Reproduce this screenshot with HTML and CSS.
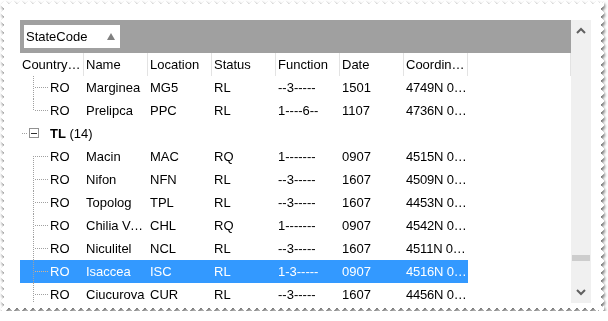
FILE: index.html
```html
<!DOCTYPE html>
<html lang="en">
<head>
    <meta charset="UTF-8">
    <title>Group by StateCode</title>
    <link rel="stylesheet" href="styles.css">
</head>
<body>
    <div class="paper">
        <div class="sheet">
            <div class="control">
                <div class="grid">
                    <div class="groupbar">
                        <div class="chip">
                            <span>StateCode</span>
                            <span class="sort-up"></span>
                        </div>
                    </div>

                    <div class="header">
                        <div class="hcell">CountryCode</div>
                        <div class="hcell">Name</div>
                        <div class="hcell">Location</div>
                        <div class="hcell">Status</div>
                        <div class="hcell">Function</div>
                        <div class="hcell">Date</div>
                        <div class="hcell">Coordinates</div>
                        <div class="hfill"></div>
                    </div>

                    <div class="rows">
                        <div class="row">
                            <div class="cell tree">RO</div>
                            <div class="cell">Marginea</div>
                            <div class="cell">MG5</div>
                            <div class="cell">RL</div>
                            <div class="cell">--3-----</div>
                            <div class="cell">1501</div>
                            <div class="cell coord">4749N 02549E</div>
                        </div>
                        <div class="row">
                            <div class="cell tree last">RO</div>
                            <div class="cell">Prelipca</div>
                            <div class="cell">PPC</div>
                            <div class="cell">RL</div>
                            <div class="cell">1----6--</div>
                            <div class="cell">1107</div>
                            <div class="cell coord">4736N 02611E</div>
                        </div>

                        <div class="group">
                            <span class="expander"><span class="minus"></span></span>
                            <span class="group-title"><b>TL</b> (14)</span>
                        </div>

                        <div class="row">
                            <div class="cell tree first">RO</div>
                            <div class="cell">Macin</div>
                            <div class="cell">MAC</div>
                            <div class="cell">RQ</div>
                            <div class="cell">1-------</div>
                            <div class="cell">0907</div>
                            <div class="cell coord">4515N 02821E</div>
                        </div>
                        <div class="row">
                            <div class="cell tree">RO</div>
                            <div class="cell">Nifon</div>
                            <div class="cell">NFN</div>
                            <div class="cell">RL</div>
                            <div class="cell">--3-----</div>
                            <div class="cell">1607</div>
                            <div class="cell coord">4509N 02822E</div>
                        </div>
                        <div class="row">
                            <div class="cell tree">RO</div>
                            <div class="cell">Topolog</div>
                            <div class="cell">TPL</div>
                            <div class="cell">RL</div>
                            <div class="cell">--3-----</div>
                            <div class="cell">1607</div>
                            <div class="cell coord">4453N 02820E</div>
                        </div>
                        <div class="row">
                            <div class="cell tree">RO</div>
                            <div class="cell">Chilia Veche</div>
                            <div class="cell">CHL</div>
                            <div class="cell">RQ</div>
                            <div class="cell">1-------</div>
                            <div class="cell">0907</div>
                            <div class="cell coord">4542N 02917E</div>
                        </div>
                        <div class="row">
                            <div class="cell tree">RO</div>
                            <div class="cell">Niculitel</div>
                            <div class="cell">NCL</div>
                            <div class="cell">RL</div>
                            <div class="cell">--3-----</div>
                            <div class="cell">1607</div>
                            <div class="cell coord">4511N 02828E</div>
                        </div>
                        <div class="row selected">
                            <div class="cell tree">RO</div>
                            <div class="cell">Isaccea</div>
                            <div class="cell">ISC</div>
                            <div class="cell">RL</div>
                            <div class="cell">1-3-----</div>
                            <div class="cell">0907</div>
                            <div class="cell coord">4516N 02827E</div>
                        </div>
                        <div class="row">
                            <div class="cell tree">RO</div>
                            <div class="cell">Ciucurova</div>
                            <div class="cell">CUR</div>
                            <div class="cell">RL</div>
                            <div class="cell">--3-----</div>
                            <div class="cell">1607</div>
                            <div class="cell coord">4456N 02829E</div>
                        </div>
                    </div>
                </div>

                <div class="scrollbar">
                    <svg class="arrow" width="10" height="7" viewBox="0 0 10 7">
                        <polyline points="1,6 5,2 9,6" fill="none" stroke="#606060" stroke-width="2"/>
                    </svg>
                    <div class="track">
                        <div class="thumb"></div>
                    </div>
                    <svg class="arrow" width="10" height="7" viewBox="0 0 10 7">
                        <polyline points="1,1 5,5 9,1" fill="none" stroke="#606060" stroke-width="2"/>
                    </svg>
                </div>
            </div>
        </div>
    </div>
</body>
</html>
```

FILE: styles.css
```css
body {
    margin: 0;
    background-color: #ffffff;
    font-family: 'Liberation Sans', Arial, sans-serif;
    font-size: 13px;
    color: #000000;
}

.paper {
    width: 603px;
    height: 310px;
    margin: 1px 0 0 1px;
    filter: drop-shadow(1px 2px 1.5px rgba(0, 0, 0, 0.5)) drop-shadow(0 0 0.5px rgba(0, 0, 0, 0.2));
}

.sheet {
    box-sizing: border-box;
    width: 100%;
    height: 100%;
    padding: 19px 13px 7px 19px;
    background-color: #ffffff;
    -webkit-mask:
        linear-gradient(#000, #000) 3px 3px / calc(100% - 6px) calc(100% - 6px) no-repeat,
        radial-gradient(circle, #000 2.6px, transparent 3px) 0 0 / 8px 6px repeat-x,
        radial-gradient(circle, #000 2.6px, transparent 3px) 0 100% / 8px 6px repeat-x,
        radial-gradient(circle, #000 2.6px, transparent 3px) 0 0 / 6px 8px repeat-y,
        radial-gradient(circle, #000 2.6px, transparent 3px) 100% 0 / 6px 8px repeat-y;
    mask:
        linear-gradient(#000, #000) 3px 3px / calc(100% - 6px) calc(100% - 6px) no-repeat,
        radial-gradient(circle, #000 2.6px, transparent 3px) 0 0 / 8px 6px repeat-x,
        radial-gradient(circle, #000 2.6px, transparent 3px) 0 100% / 8px 6px repeat-x,
        radial-gradient(circle, #000 2.6px, transparent 3px) 0 0 / 6px 8px repeat-y,
        radial-gradient(circle, #000 2.6px, transparent 3px) 100% 0 / 6px 8px repeat-y;
}

.control {
    display: flex;
    width: 571px;
    height: 283px;
    overflow: hidden;
}

.grid {
    width: 551px;
    display: flex;
    flex-direction: column;
    overflow: hidden;
}

/* group by bar */
.groupbar {
    height: 33px;
    flex: none;
    box-sizing: border-box;
    padding: 5px 4px;
    background-color: #a0a0a0;
}

.chip {
    width: 96px;
    height: 23px;
    box-sizing: border-box;
    padding: 0 5px 0 2px;
    display: flex;
    align-items: center;
    justify-content: space-between;
    background-color: #ffffff;
    line-height: 23px;
}

.sort-up {
    width: 0;
    height: 0;
    border-left: 4px solid transparent;
    border-right: 4px solid transparent;
    border-bottom: 7px solid #808080;
    margin-top: -1px;
}

/* column header */
.header {
    display: flex;
    height: 23px;
    flex: none;
}

.hcell {
    width: 64px;
    box-sizing: border-box;
    padding: 0 1px 0 2px;
    line-height: 23px;
    white-space: nowrap;
    overflow: hidden;
    text-overflow: ellipsis;
    border-right: 1px solid #e3e3e3;
}

.hfill {
    width: 102px;
    border-right: 1px solid #e3e3e3;
}

/* rows */
.row {
    display: grid;
    grid-template-columns: repeat(7, 64px);
    width: 448px;
    height: 23px;
}

.row.selected {
    background-color: #3399ff;
    color: #ffffff;
}

.cell {
    padding: 0 0 0 2px;
    line-height: 23px;
    white-space: nowrap;
    overflow: hidden;
    text-overflow: ellipsis;
}

.cell.coord {
    letter-spacing: -0.2px;
}

.tree {
    padding-left: 30px;
    background:
        repeating-linear-gradient(to bottom, #a0a0a0 0 1px, transparent 1px 2px) 13px 0 / 1px 100% no-repeat,
        repeating-linear-gradient(to right, #a0a0a0 0 1px, transparent 1px 2px) 15px 11px / 14px 1px no-repeat;
}

.tree.first {
    background:
        repeating-linear-gradient(to bottom, #a0a0a0 0 1px, transparent 1px 2px) 13px 11px / 1px 12px no-repeat,
        repeating-linear-gradient(to right, #a0a0a0 0 1px, transparent 1px 2px) 15px 11px / 14px 1px no-repeat;
}

.tree.last {
    background:
        repeating-linear-gradient(to bottom, #a0a0a0 0 1px, transparent 1px 2px) 13px 0 / 1px 12px no-repeat,
        repeating-linear-gradient(to right, #a0a0a0 0 1px, transparent 1px 2px) 15px 11px / 14px 1px no-repeat;
}

.selected .tree {
    background:
        repeating-linear-gradient(to bottom, #a0a0a0 0 1px, transparent 1px 2px) 13px 0 / 1px 100% no-repeat,
        repeating-linear-gradient(to right, #d9b48a 0 1px, transparent 1px 2px) 15px 11px / 14px 1px no-repeat;
}

/* group row */
.group {
    display: flex;
    align-items: center;
    height: 23px;
    padding-left: 9px;
    background: repeating-linear-gradient(to right, #a0a0a0 0 1px, transparent 1px 2px) 2px 11px / 5px 1px no-repeat;
}

.expander {
    width: 10px;
    height: 10px;
    box-sizing: border-box;
    border: 1px solid #919191;
    display: flex;
    align-items: center;
    justify-content: center;
    margin-top: -1px;
}

.minus {
    width: 6px;
    height: 1px;
    background-color: #303030;
}

.group-title {
    margin-left: 11px;
    line-height: 23px;
}

/* scrollbar */
.scrollbar {
    width: 20px;
    display: flex;
    flex-direction: column;
    align-items: center;
    background-color: #f0f0f0;
}

.arrow {
    flex: none;
    margin: 7px 0;
}

.track {
    flex: 1;
    width: 100%;
    position: relative;
}

.thumb {
    position: absolute;
    left: 1px;
    right: 1px;
    top: 214px;
    height: 6px;
    background-color: #cdcdcd;
}
```
